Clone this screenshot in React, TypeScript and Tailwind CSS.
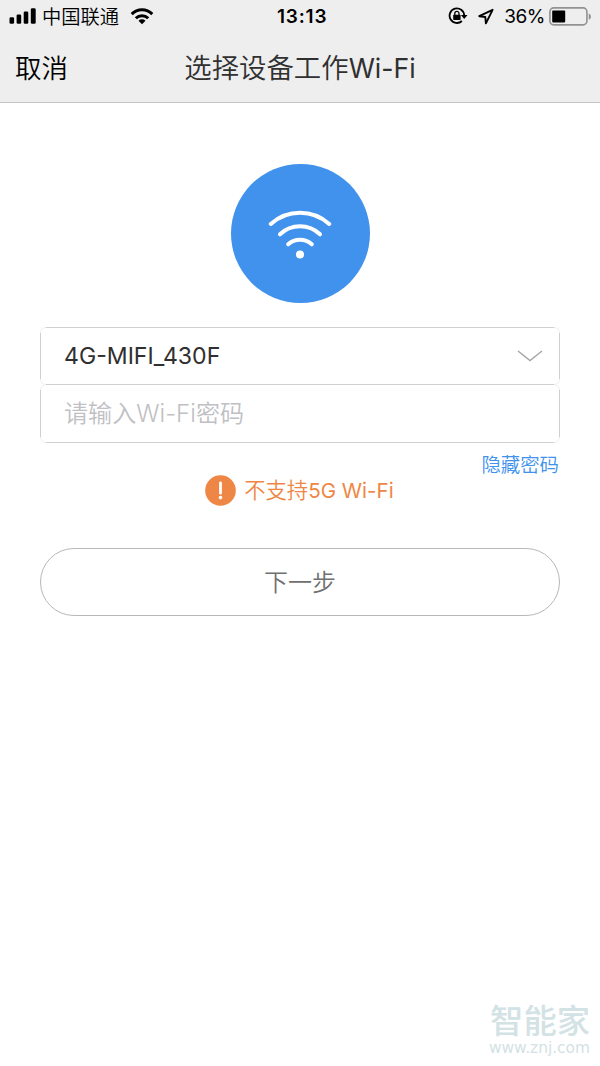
import React, { useState } from 'react';

const StatusBar: React.FC = () => (
    <div className="relative flex h-8 items-center justify-between pl-[9px] pr-[8px] text-black">
        <div className="flex items-center">
            <svg width="27" height="16" viewBox="0 0 27 16" fill="currentColor">
                <rect x="0.5" y="9.3" width="4.6" height="6.4" rx="1.3" />
                <rect x="7.6" y="6.5" width="4.6" height="9.2" rx="1.3" />
                <rect x="14.7" y="3.4" width="4.6" height="12.3" rx="1.3" />
                <rect x="21.8" y="0.3" width="4.9" height="15.4" rx="1.3" />
            </svg>
            <span className="ml-[6px] pt-[2px] text-[19.3px] font-[350] leading-8">中国联通</span>
            <svg className="ml-[11px]" width="24" height="17" viewBox="0 0 24 17">
                <g fill="none" stroke="currentColor" strokeWidth="3">
                    <path d="M1.7 6.1a14.6 14.6 0 0 1 20.6 0" />
                    <path d="M5.8 10.2a8.8 8.8 0 0 1 12.4 0" />
                </g>
                <path d="M12 16.2l-3.5-3.5a5 5 0 0 1 7 0z" fill="currentColor" />
            </svg>
        </div>
        <span className="absolute left-[277px] top-px text-[19px] font-semibold leading-8 tracking-[0.8px]">13:13</span>
        <div className="flex items-center">
            <svg width="20" height="18" viewBox="0 0 20 18">
                <path d="M13.9 14A7.3 7.3 0 1 1 16.2 8.4" fill="none" stroke="currentColor" strokeWidth="1.8" />
                <path d="M12.9 8.1h6.6l-3.3 4z" fill="currentColor" />
                <rect x="5.2" y="7.8" width="7.4" height="5.2" rx="0.7" fill="currentColor" />
                <path d="M6.8 8V6.4a2.1 2.1 0 0 1 4.2 0V8" fill="none" stroke="currentColor" strokeWidth="1.3" />
            </svg>
            <svg className="ml-[9px]" width="17" height="17" viewBox="0 0 17 17" fill="none" stroke="currentColor" strokeWidth="1.9" strokeLinejoin="round">
                <path d="M15.6 1.8L2.2 8.2l6.1.8.6 6.4z" />
            </svg>
            <span className="ml-[10px] pt-[2px] text-[19px] leading-8 tracking-[-0.5px]">36%</span>
            <svg className="ml-[4px]" width="43" height="19" viewBox="0 0 43 19">
                <rect x="0.9" y="0.9" width="37" height="17" rx="3.8" fill="none" stroke="#929292" strokeWidth="1.6" />
                <rect x="3.2" y="3.6" width="13" height="11.8" rx="0.8" fill="#000" />
                <path d="M39.7 6.4c3 1 3 5.2 0 6.2z" fill="#929292" />
            </svg>
        </div>
    </div>
);

const WifiBadge: React.FC = () => (
    <div className="mx-auto flex size-[139px] items-center justify-center rounded-full bg-[#4092ed]">
        <svg width="64" height="50" viewBox="0 0 64 50" fill="none" stroke="#fff" strokeWidth="4" strokeLinecap="round">
            <path d="M2.8 15A43.5 43.5 0 0 1 61.2 15" />
            <path d="M12 25.3a29 29 0 0 1 40 0" />
            <path d="M20.2 35.3a17.7 17.7 0 0 1 23.6 0" />
            <circle cx="32" cy="45.6" r="4" fill="#fff" stroke="none" />
        </svg>
    </div>
);

// Straight edges are darker than the rounded corners that join them
const Field: React.FC<{ children: React.ReactNode }> = ({ children }) => (
    <div className="relative h-full rounded-[6px] border border-[#efefef] before:pointer-events-none before:absolute before:-inset-x-px before:inset-y-[5px] before:border-x before:border-[#d0d0d0] after:pointer-events-none after:absolute after:inset-x-[5px] after:-inset-y-px after:border-y after:border-[#d0d0d0]">
        {children}
    </div>
);

const App: React.FC = () => {
    const [password, setPassword] = useState('');
    const [isVisible, setIsVisible] = useState(true);

    return (
        <div className="flex h-[1066px] w-[600px] flex-col bg-white font-['Inter','Noto_Sans_CJK_SC',sans-serif]">
            <header className="h-[103px] border-b border-[#c4c4c4] bg-[#eeeeee]">
                <StatusBar />
                <div className="relative flex h-[70px] items-center px-[15px] pt-[3px] text-[26.5px]">
                    <button className="font-[350] text-black">取消</button>
                    <h1 className="pointer-events-none absolute inset-x-0 text-center text-[27.4px] font-[350] text-[#303030]">
                        选择设备工作<span className="text-[26.6px] font-normal">Wi-Fi</span>
                    </h1>
                </div>
            </header>

            <main className="flex flex-1 flex-col px-10 pt-[61px]">
                <WifiBadge />

                <div className="mt-6 h-[58px]">
                    <Field>
                        <button className="flex size-full items-center justify-between pl-[23px] pr-4 text-[23.1px] text-[#303030]">
                            <span>4G-MIFI_430F</span>
                            <svg width="26" height="12" viewBox="0 0 26 12" fill="none" stroke="#a5a5a5" strokeWidth="1.4">
                                <path d="M1 1l12 9.5L25 1" />
                            </svg>
                        </button>
                    </Field>
                </div>
                <div className="-mt-px h-[59px]">
                    <Field>
                        <input
                            type={isVisible ? 'text' : 'password'}
                            placeholder="请输入Wi-Fi密码"
                            value={password}
                            onChange={(e) => setPassword(e.target.value)}
                            className="size-full px-[23px] text-[24.1px] font-[350] text-[#303030] outline-none placeholder:text-[#c0c0c4]"
                        />
                    </Field>
                </div>
                <button
                    onClick={() => setIsVisible(!isVisible)}
                    className="mt-[8px] mr-px self-end text-[19.4px] font-[350] leading-[28px] text-[#4092ed]"
                >
                    隐藏密码
                </button>

                <div className="-mt-[4px] flex h-[30px] items-center justify-center pr-px text-[#ee8745]">
                    <svg width="31" height="31" viewBox="0 0 31 31">
                        <circle cx="15.5" cy="15.5" r="15.3" fill="#ee8745" />
                        <path d="M15.5 8v10.2" stroke="#fff" strokeWidth="2.8" strokeLinecap="round" />
                        <circle cx="15.5" cy="22.6" r="1.8" fill="#fff" />
                    </svg>
                    <span className="ml-2 pt-px text-[21.3px] font-[350]">
                        不支持<span className="text-[20.6px] font-normal">5G Wi-Fi</span>
                    </span>
                </div>

                <button className="mt-[43px] h-[68px] rounded-full border border-[#b8b8b8] pt-[2px] text-[24px] font-[350] text-[#707070]">
                    下一步
                </button>

                <div className="-mr-[30px] mt-auto mb-[8px] flex flex-col items-end text-[#d3e2e5]">
                    <span className="text-[33.3px] font-medium leading-[33px]">智能家</span>
                    <span className="font-['DejaVu_Sans',sans-serif] text-[15.4px] leading-5">www.znj.com</span>
                </div>
            </main>
        </div>
    );
};

export default App;
